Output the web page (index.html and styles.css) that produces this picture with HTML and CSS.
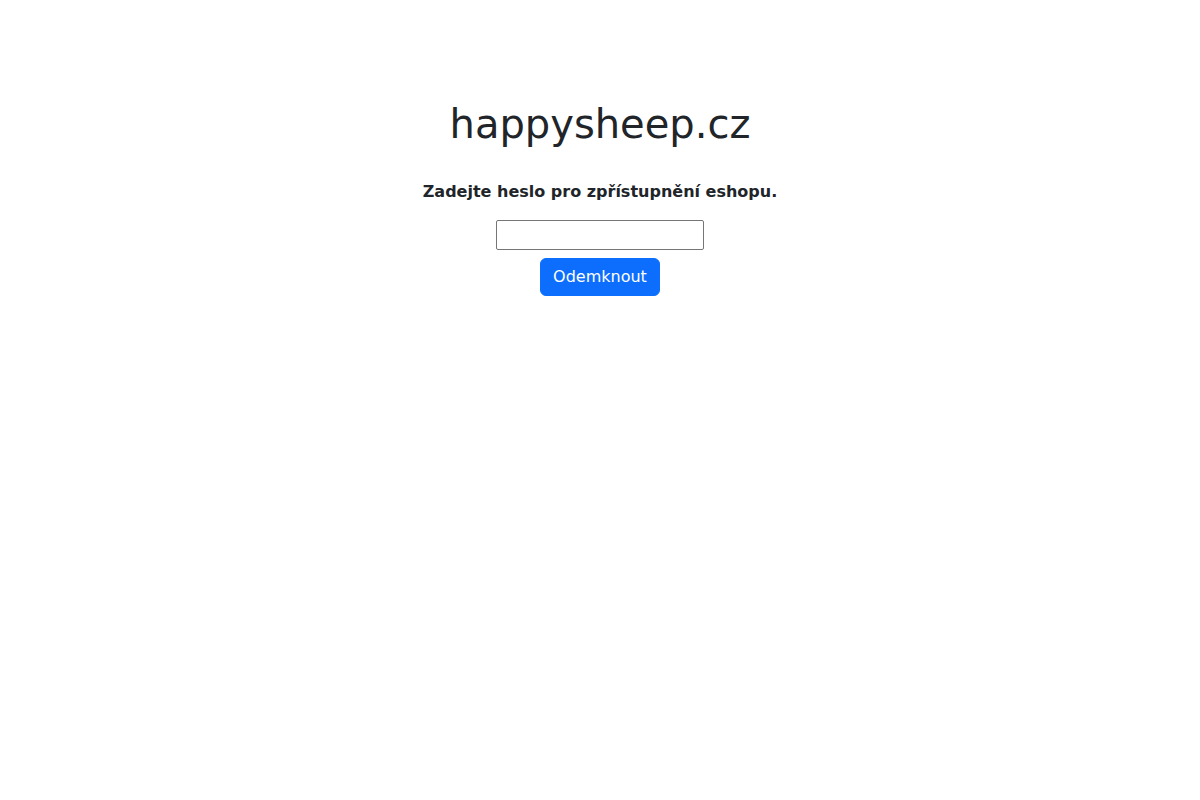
FILE: index.html
```html
<!DOCTYPE html>
<html lang="cs">
<head>
<meta charset="utf-8">
<title>happysheep.cz</title>
<link rel="stylesheet" href="styles.css">
</head>
<body>
<main class="page">
  <h1 class="title">happysheep.cz</h1>
  <p class="lead">Zadejte heslo pro zpřístupnění eshopu.</p>
  <form class="unlock">
    <input class="pass" type="password" name="password">
    <button class="btn" type="submit">Odemknout</button>
  </form>
</main>
</body>
</html>
```
FILE: styles.css
```css
* { box-sizing: border-box; }
html, body { margin: 0; padding: 0; background: #fff; }
body {
  font-family: "DejaVu Sans", sans-serif;
  font-size: 16px;
  line-height: 1.5;
  color: #212529;
}
.page {
  padding-top: 100px;
  text-align: center;
}
.title {
  margin: 0 0 32px;
  font-size: 40px;
  font-weight: 500;
  line-height: 1.2;
}
.lead {
  margin: 0 0 16px;
  font-weight: 700;
}
.unlock {
  display: flex;
  flex-direction: column;
  align-items: center;
  gap: 8px;
}
.pass {
  width: 208px;
  height: 30px;
  border: 1px solid #767676;
  border-radius: 2px;
  padding: 1px 2px;
  font: inherit;
  background: #fff;
}
.btn {
  font: inherit;
  color: #fff;
  background: #0d6efd;
  border: 1px solid #0d6efd;
  border-radius: 6px;
  padding: 6px 12px;
  line-height: 24px;
  cursor: pointer;
}
```
